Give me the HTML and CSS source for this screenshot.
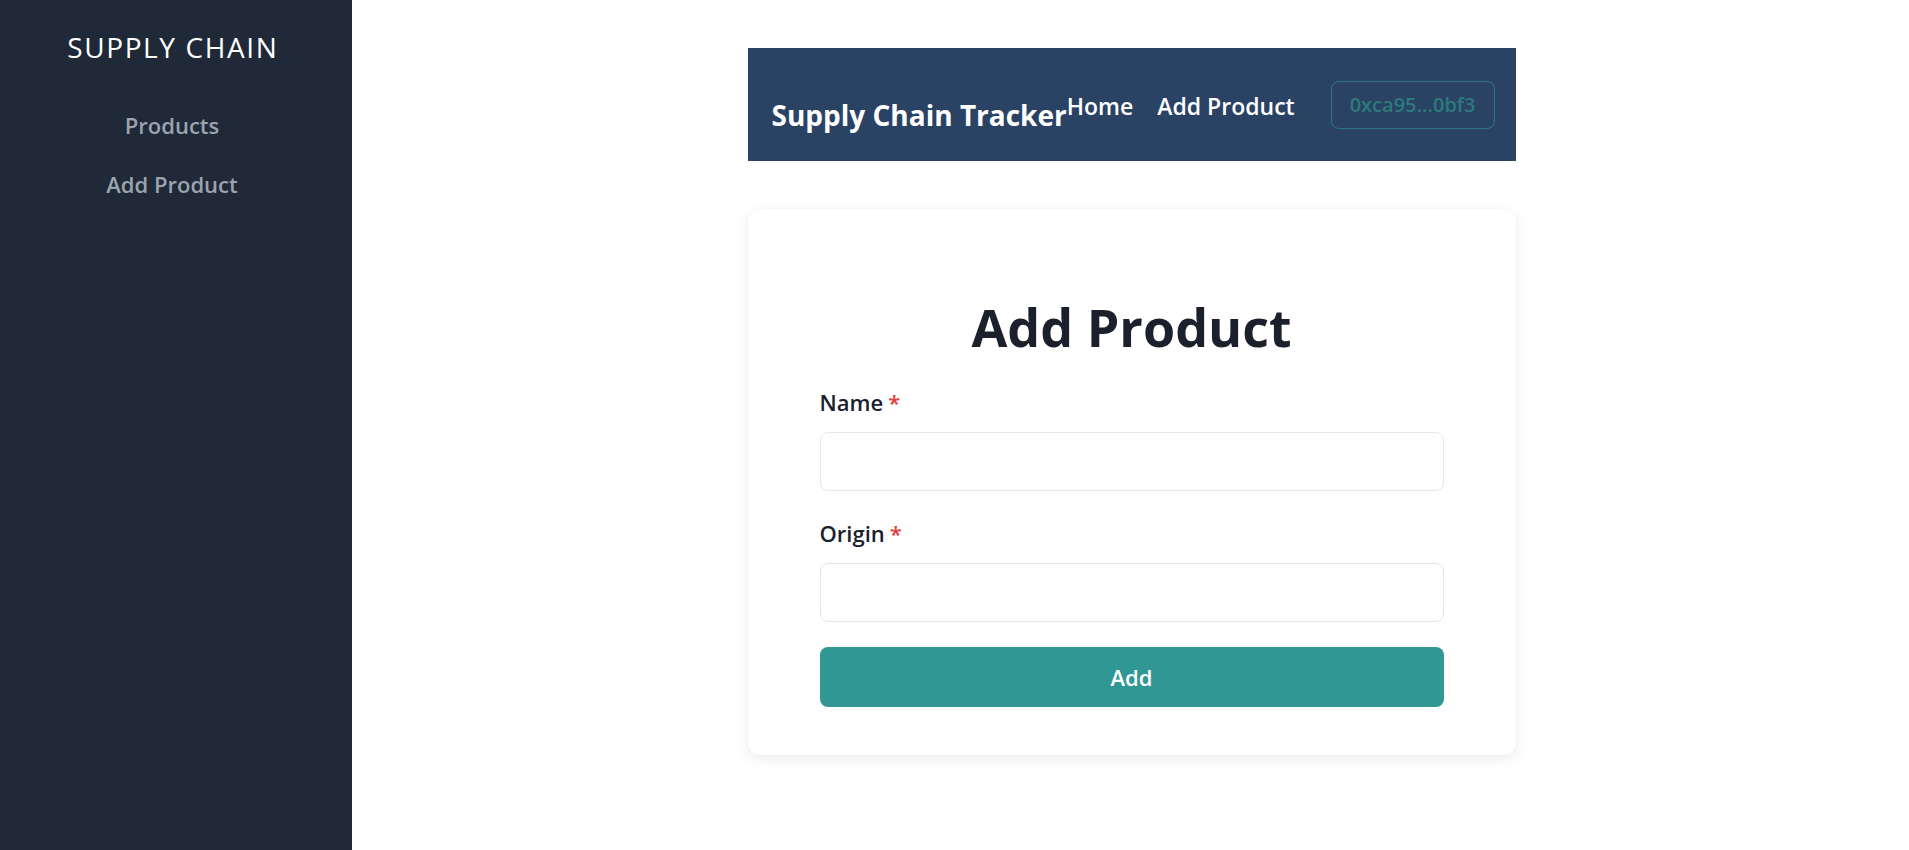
FILE: index.html
```html
<!DOCTYPE html>
<html lang="en">
<head>
<meta charset="utf-8">
<title>Supply Chain Tracker</title>
<link rel="stylesheet" href="styles.css">
</head>
<body>
  <aside class="sidebar">
    <div class="brand">SUPPLY CHAIN</div>
    <nav class="side-nav">
      <a class="side-link" href="#">Products</a>
      <a class="side-link" href="#">Add Product</a>
    </nav>
  </aside>
  <main class="main">
    <header class="topbar">
      <h1 class="topbar-title">Supply Chain Tracker</h1>
      <nav class="topbar-nav">
        <a class="topbar-link" href="#">Home</a>
        <a class="topbar-link" href="#">Add Product</a>
        <button class="wallet" type="button">0xca95...0bf3</button>
      </nav>
    </header>
    <section class="card">
      <h2 class="card-title">Add Product</h2>
      <form class="form">
        <div class="field">
          <label class="label">Name<span class="req">*</span></label>
          <input class="input" type="text">
        </div>
        <div class="field">
          <label class="label">Origin<span class="req">*</span></label>
          <input class="input" type="text">
        </div>
        <button class="submit" type="button">Add</button>
      </form>
    </section>
  </main>
</body>
</html>
```
FILE: styles.css
```css
* { box-sizing: border-box; }
html, body { height: 100%; }
body {
  margin: 0;
  display: flex;
  font-family: "Open Sans", "Noto Sans", sans-serif;
  background: #ffffff;
  color: #1a202c;
}
.sidebar {
  width: 352px;
  flex-shrink: 0;
  background: #1f2937;
  min-height: 100vh;
  padding: 27px 8px 0 0;
  display: flex;
  flex-direction: column;
  align-items: center;
}
.brand {
  color: #ffffff;
  font-size: 28px;
  line-height: 40px;
  letter-spacing: 1.6px;
  font-weight: 400;
  margin-right: -1.6px;
}
.side-nav {
  margin-top: 42px;
  display: flex;
  flex-direction: column;
  align-items: center;
  gap: 26px;
}
.side-link {
  color: #9ca3af;
  text-decoration: none;
  font-size: 22px;
  line-height: 33px;
  font-weight: 600;
}
.main {
  flex: 1;
  display: flex;
  flex-direction: column;
  align-items: center;
  padding-top: 48px;
  padding-left: 2px;
}
.topbar {
  width: 768px;
  height: 113px;
  background: #2a4365;
  padding: 24px;
  display: flex;
  align-items: center;
  justify-content: space-between;
}
.topbar-title {
  margin: 20px 0 0 0;
  color: #ffffff;
  font-size: 28px;
  line-height: 32px;
  font-weight: 700;
  white-space: nowrap;
}
.topbar-nav {
  display: flex;
  align-items: center;
  gap: 24px;
}
.topbar-link {
  color: #ffffff;
  text-decoration: none;
  font-size: 23px;
  line-height: 32px;
  font-weight: 600;
  white-space: nowrap;
  margin-top: 2px;
}
.wallet {
  margin-left: 12px;
  height: 48px;
  padding: 0 18px;
  border: 1px solid rgba(49, 151, 149, 0.6);
  border-radius: 8px;
  background: transparent;
  color: #2c7a7b;
  font-family: inherit;
  font-size: 20px;
  font-weight: 600;
  white-space: nowrap;
}
.card {
  width: 768px;
  margin-top: 48px;
  background: #ffffff;
  border-radius: 12px;
  box-shadow: 0 4px 14px rgba(0, 0, 0, 0.08), 0 0 2px rgba(0, 0, 0, 0.05);
  padding: 84px 72px 48px;
}
.card-title {
  margin: 0;
  text-align: center;
  font-size: 52px;
  line-height: 67px;
  font-weight: 700;
  color: #1a202c;
}
.form {
  margin-top: 26px;
  display: flex;
  flex-direction: column;
}
.field { display: flex; flex-direction: column; }
.field + .field { margin-top: 26px; }
.label {
  font-size: 22px;
  line-height: 33px;
  font-weight: 600;
  color: #1a202c;
  margin-bottom: 13px;
}
.req {
  color: #e53e3e;
  margin-left: 5px;
}
.input {
  height: 59px;
  border: 1px solid #e2e8f0;
  border-radius: 8px;
  padding: 0 20px;
  font-family: inherit;
  font-size: 20px;
  outline: none;
}
.submit {
  margin-top: 25px;
  height: 60px;
  border: none;
  border-radius: 8px;
  background: #319795;
  color: #ffffff;
  font-family: inherit;
  font-size: 22px;
  font-weight: 600;
}
```
